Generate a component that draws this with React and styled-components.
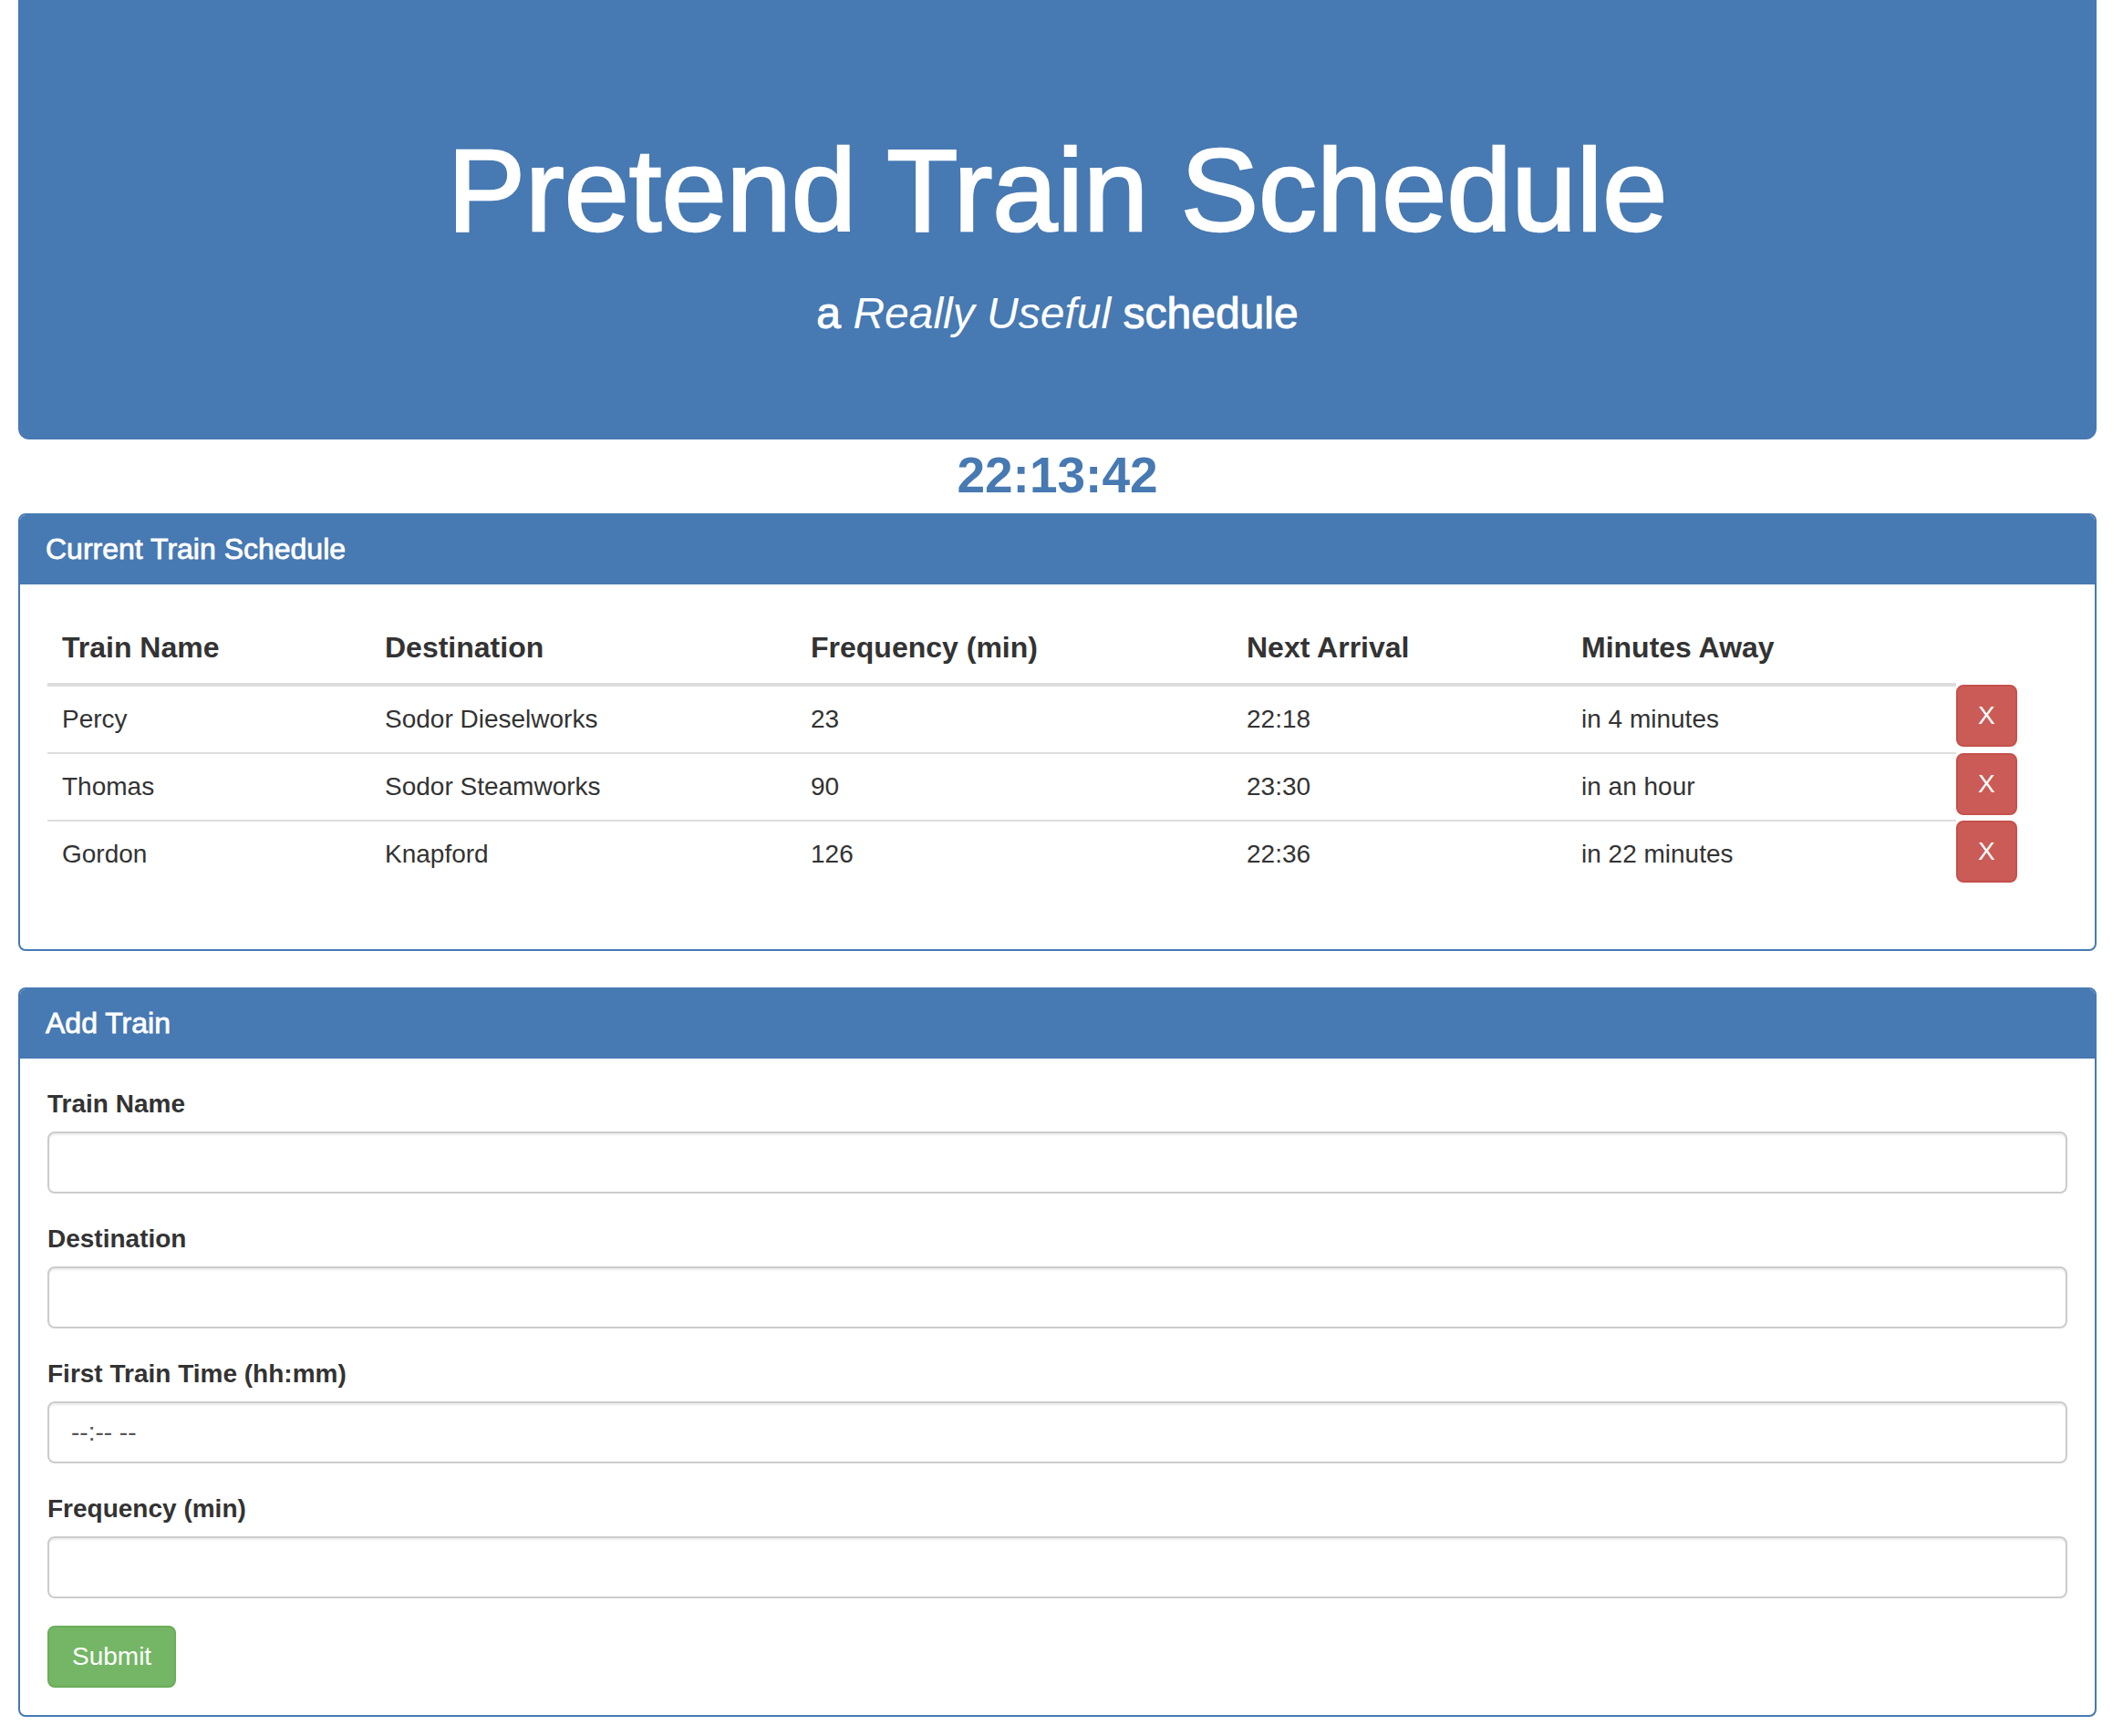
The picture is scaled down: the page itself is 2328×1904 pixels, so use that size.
import * as React from 'react';
import styled, { createGlobalStyle } from 'styled-components';

const GlobalStyle = createGlobalStyle`
  html, body {
    margin: 0;
    padding: 0;
    background: #fff;
  }
  body {
    font-family: "Liberation Sans", Arial, sans-serif;
    font-size: 28px;
    line-height: 40px;
    color: #333;
  }
  * { box-sizing: border-box; }
`;

const BLUE = '#4779b2';

const Page = styled.div`
  width: 2279px;
  margin-left: 20px;
  padding-bottom: 22px;
`;

const Jumbotron = styled.header`
  background: ${BLUE};
  border-radius: 0 0 12px 12px;
  padding: 139px 0 111px;
  text-align: center;
  color: #fff;
`;

// medium weight (Helvetica Neue 500) faked with a thin stroke
const Title = styled.h1`
  margin: 0;
  font-size: 128px;
  line-height: 1.1;
  font-weight: 400;
  -webkit-text-stroke: 2.5px #fff;
`;

const Subtitle = styled.h3`
  margin: 38px 0 0;
  font-size: 48px;
  line-height: 1.1;
  font-weight: 400;
  -webkit-text-stroke: 1px #fff;
  em {
    font-style: italic;
    -webkit-text-stroke: 0;
  }
`;

const Clock = styled.div`
  margin: 9px 0 12px;
  text-align: center;
  font-size: 55px;
  line-height: 1.1;
  font-weight: 700;
  color: ${BLUE};
`;

const Panel = styled.section`
  border: 2px solid ${BLUE};
  border-radius: 8px;
  margin-bottom: 40px;
  background: #fff;
  overflow: hidden;
`;

const PanelHeading = styled.div`
  background: ${BLUE};
  color: #fff;
  padding: 19px 30px;
  margin: -2px -2px 0;
`;

const PanelTitle = styled.h3`
  margin: 0;
  font-size: 32px;
  line-height: 40px;
  font-weight: 400;
  -webkit-text-stroke: 0.8px #fff;
`;

const PanelBody = styled.div`
  padding: 30px;
`;

const Table = styled.table`
  border-collapse: collapse;
  table-layout: fixed;
  width: 2161px;
  margin-bottom: 38px;
`;

const Th = styled.th`
  width: ${p => p.$w}px;
  text-align: left;
  font-size: 32px;
  line-height: 46px;
  font-weight: 700;
  padding: 16px;
  border-bottom: ${p => (p.$blank ? 'none' : '4px solid #ddd')};
  vertical-align: bottom;
`;

const Td = styled.td`
  padding: 16px;
  font-size: 28px;
  line-height: 40px;
  border-top: ${p => (p.$first ? 'none' : '2px solid #ddd')};
  vertical-align: top;
`;

const ActionCell = styled.td`
  padding: 0;
  vertical-align: top;
`;

const Button = styled.button`
  display: inline-block;
  font-family: inherit;
  font-size: 28px;
  line-height: 40px;
  color: #fff;
  padding: 12px ${p => p.$px || 22}px;
  border-radius: 8px;
  border: 2px solid ${p => p.$border};
  background: ${p => p.$bg};
  cursor: pointer;
`;

const FormGroup = styled.div`
  margin-bottom: 30px;
`;

const Label = styled.label`
  display: block;
  font-weight: 700;
  font-size: 28px;
  line-height: 40px;
  margin-bottom: 10px;
`;

const Input = styled.input`
  display: block;
  width: 100%;
  height: 68px;
  padding: 12px 24px;
  font-family: inherit;
  font-size: 28px;
  line-height: 40px;
  color: #555;
  background: #fff;
  border: 2px solid #ccc;
  border-radius: 8px;
  box-shadow: inset 0 2px 2px rgba(0, 0, 0, 0.075);
  outline: none;
  &::placeholder {
    color: #555;
  }
`;

const trains = [
  { name: 'Percy', dest: 'Sodor Dieselworks', freq: 23, next: '22:18', away: 'in 4 minutes' },
  { name: 'Thomas', dest: 'Sodor Steamworks', freq: 90, next: '23:30', away: 'in an hour' },
  { name: 'Gordon', dest: 'Knapford', freq: 126, next: '22:36', away: 'in 22 minutes' },
];

const columns = [
  { label: 'Train Name', w: 354 },
  { label: 'Destination', w: 467 },
  { label: 'Frequency (min)', w: 478 },
  { label: 'Next Arrival', w: 367 },
  { label: 'Minutes Away', w: 427 },
];

const fields = [
  { id: 'train-name', label: 'Train Name' },
  { id: 'destination', label: 'Destination' },
  { id: 'first-time', label: 'First Train Time (hh:mm)', placeholder: '--:-- --' },
  { id: 'frequency', label: 'Frequency (min)' },
];

const App = () => {
  return (
    <Page>
      <GlobalStyle />
      <Jumbotron>
        <Title>Pretend Train Schedule</Title>
        <Subtitle>a <em>Really Useful</em> schedule</Subtitle>
      </Jumbotron>

      <Clock>22:13:42</Clock>

      <Panel>
        <PanelHeading>
          <PanelTitle>Current Train Schedule</PanelTitle>
        </PanelHeading>
        <PanelBody>
          <Table>
            <thead>
              <tr>
                {columns.map(c => (
                  <Th key={c.label} $w={c.w}>{c.label}</Th>
                ))}
                <Th $w={68} $blank />
              </tr>
            </thead>
            <tbody>
              {trains.map((t, i) => (
                <tr key={t.name}>
                  <Td $first={i === 0}>{t.name}</Td>
                  <Td $first={i === 0}>{t.dest}</Td>
                  <Td $first={i === 0}>{t.freq}</Td>
                  <Td $first={i === 0}>{t.next}</Td>
                  <Td $first={i === 0}>{t.away}</Td>
                  <ActionCell>
                    <Button $bg="#cb5b56" $border="#c4514c">X</Button>
                  </ActionCell>
                </tr>
              ))}
            </tbody>
          </Table>
        </PanelBody>
      </Panel>

      <Panel>
        <PanelHeading>
          <PanelTitle>Add Train</PanelTitle>
        </PanelHeading>
        <PanelBody>
          {fields.map(f => (
            <FormGroup key={f.id}>
              <Label htmlFor={f.id}>{f.label}</Label>
              <Input id={f.id} type="text" placeholder={f.placeholder} />
            </FormGroup>
          ))}
          <Button $bg="#74b665" $border="#6aad5b" $px={25}>Submit</Button>
        </PanelBody>
      </Panel>
    </Page>
  );
};

export default App;
